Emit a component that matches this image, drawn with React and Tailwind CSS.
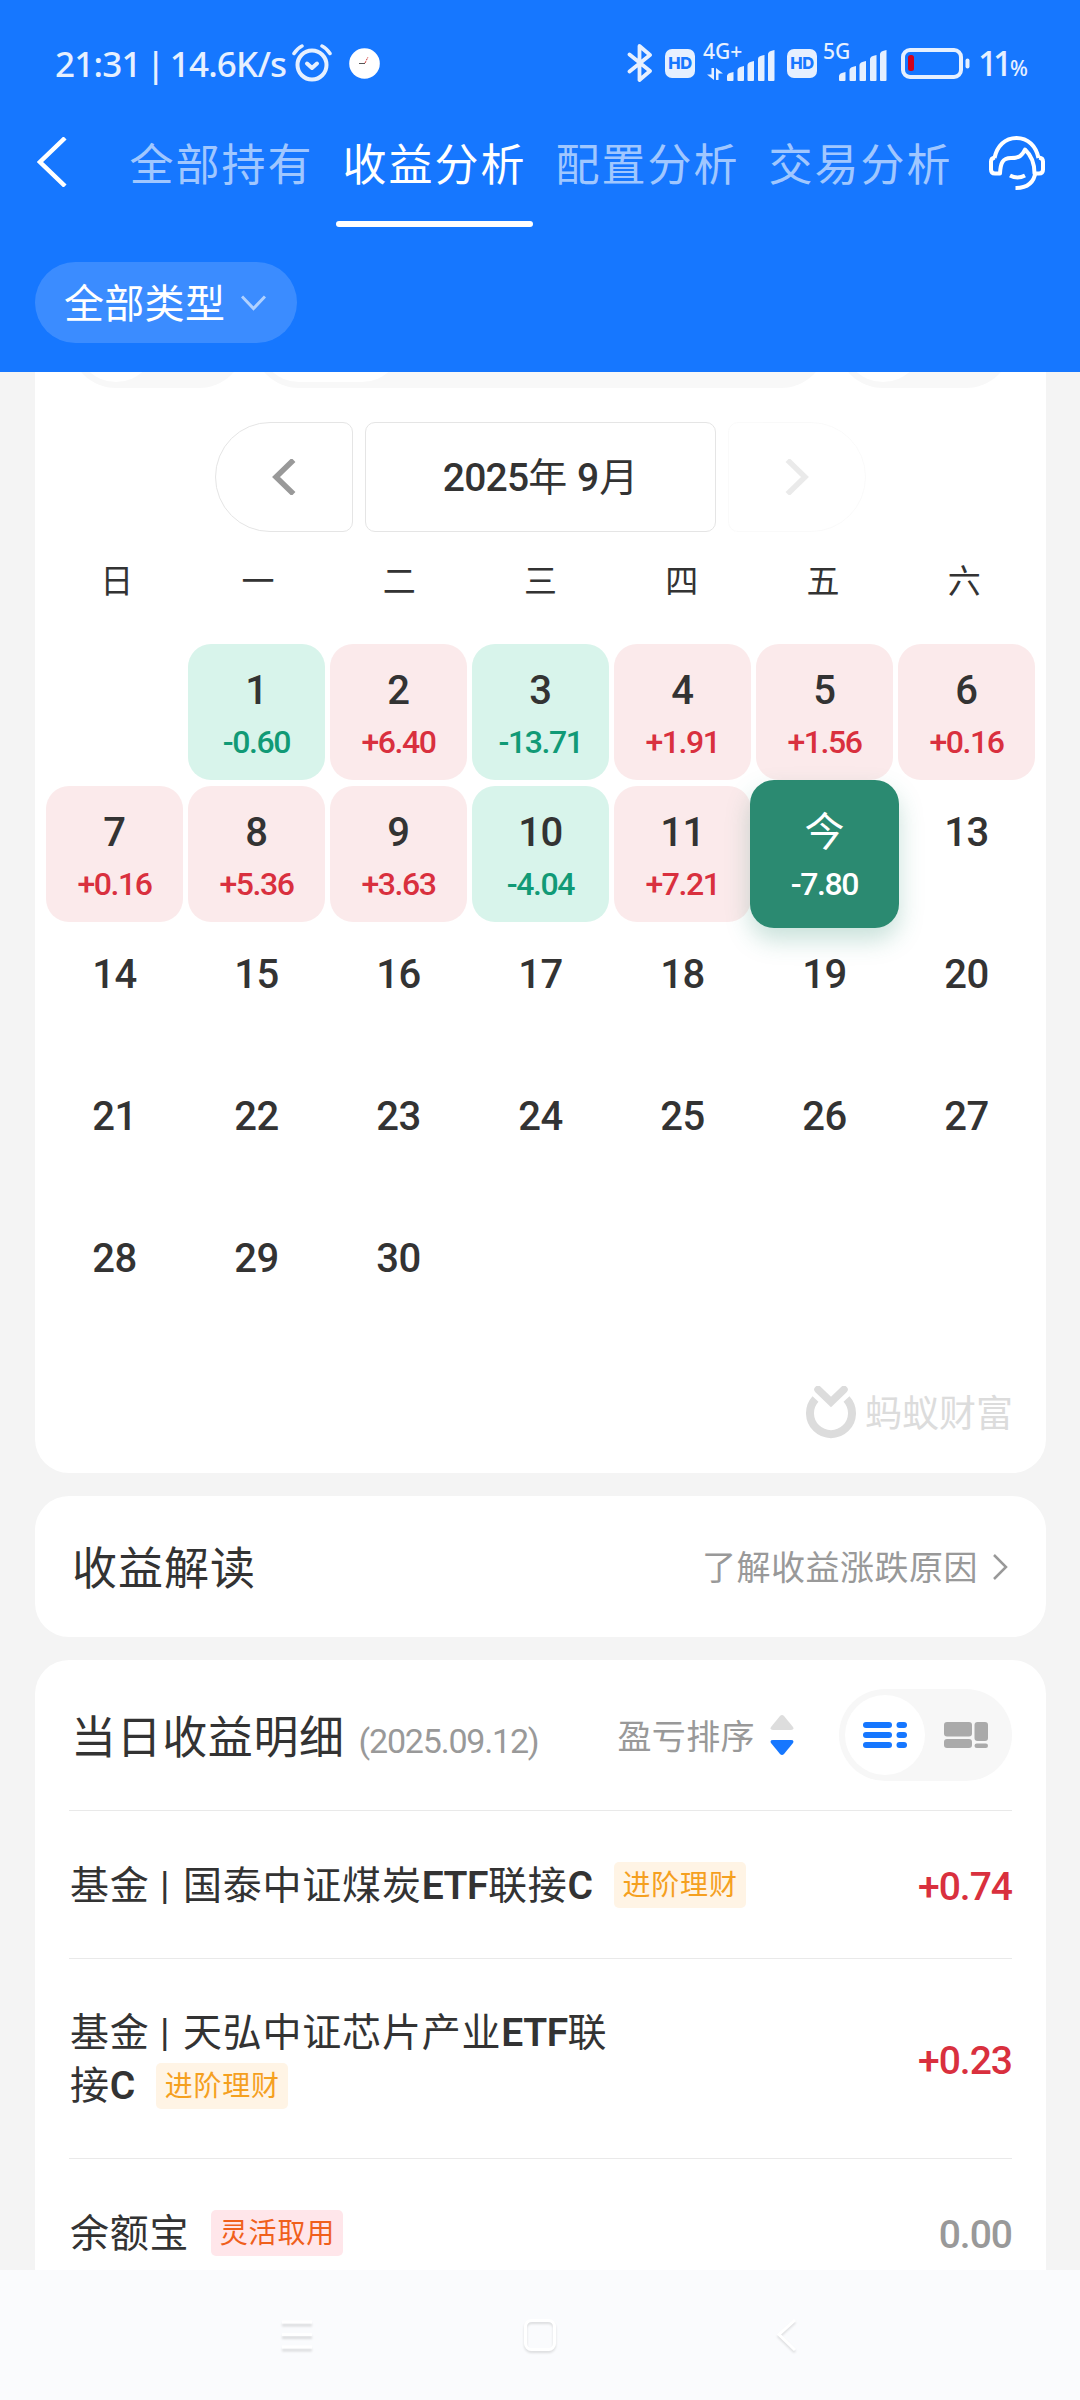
const weekdays = ['日', '一', '二', '三', '四', '五', '六'];

const profits = {
    1: '-0.60',
    2: '+6.40',
    3: '-13.71',
    4: '+1.91',
    5: '+1.56',
    6: '+0.16',
    7: '+0.16',
    8: '+5.36',
    9: '+3.63',
    10: '-4.04',
    11: '+7.21',
    12: '-7.80',
};

const today = 12;

// September 2025 starts on a Monday, so one empty cell comes first
const cells = [null, ...Array.from({ length: 30 }, (_, i) => i + 1)];

const tabs = ['全部持有', '收益分析', '配置分析', '交易分析'];

const details = [
    {
        name: (
            <>
                基金 <span className="mr-[2px]">|</span> 国泰中证煤炭
                <b className="font-semibold tracking-[-0.5px]">ETF</b>联接<b className="font-semibold tracking-[-1px]">C</b>
            </>
        ),
        tag: '进阶理财',
        tagClass: 'bg-[#fff4e5] text-[#f5a01f]',
        value: '+0.74',
        valueClass: 'text-[#d9303e]',
        height: 'h-[148px]',
    },
    {
        name: (
            <>
                基金 <span className="mr-[2px]">|</span> 天弘中证芯片产业
                <b className="font-semibold tracking-[-0.5px]">ETF</b>联<br />接<b className="font-semibold tracking-[-1px]">C</b>
            </>
        ),
        tag: '进阶理财',
        tagClass: 'bg-[#fff4e5] text-[#f5a01f]',
        value: '+0.23',
        valueClass: 'text-[#d9303e]',
        height: 'h-[200px]',
    },
    {
        name: '余额宝',
        tag: '灵活取用',
        tagClass: 'bg-[#ffe6ea] text-[#f0601c]',
        value: '0.00',
        valueClass: 'text-[#999999]',
        height: 'h-[148px]',
    },
];

function Chevron({ className, d, box, stroke }) {
    return (
        <svg className={className} viewBox={box} fill="none" stroke="currentColor" strokeWidth={stroke}>
            <path d={d} />
        </svg>
    );
}

function HdBadge() {
    return (
        <div className="flex h-[29px] w-[30px] items-center justify-center rounded-[7px] bg-[#e6f0ff] font-['Inter'] text-[16.5px] leading-none font-extrabold tracking-[-0.5px] text-[#1677ff]">
            HD
        </div>
    );
}

function SignalBars() {
    return (
        <svg className="h-[31px] w-[48px]" viewBox="0 0 48 31" fill="#e6f0ff">
            <path d="M0 26q0-3 6.500-4v8q0 1-1 1H1q-1 0-1-1z" />
            <path d="M10.500 20q0-3 6.500-4v14q0 1-1 1h-4.500q-1 0-1-1z" />
            <path d="M20.500 15q0-3 6.500-4v19q0 1-1 1h-4.500q-1 0-1-1z" />
            <path d="M31 9q0-3 6.500-4v25q0 1-1 1h-4.500q-1 0-1-1z" />
            <path d="M41 4q0-3 6.500-4v30q0 1-1 1h-4.500q-1 0-1-1z" />
        </svg>
    );
}

function StatusBar() {
    return (
        <div className="flex h-[126px] items-center pl-[55px] text-[#e6f0ff]">
            <span className="w-[237px] font-['Noto_Sans'] text-[35px] leading-none font-medium tracking-[-0.8px] whitespace-nowrap [word-spacing:-3px]">
                21:31 | 14.6K/s
            </span>
            <svg className="h-[38px] w-[40px]" viewBox="0 0 40 38" fill="none" stroke="currentColor" strokeLinecap="round" strokeLinejoin="round">
                <circle cx="20" cy="21" r="14.500" strokeWidth="4" />
                <path d="M15 19.500l5 4.500 5-4.500" strokeWidth="4" />
                <path d="M2 9.500Q5 4.500 10 2M38 9.500Q35 4.500 30 2" strokeWidth="3.500" />
            </svg>
            <svg className="ml-[17px] h-[31px] w-[31px]" viewBox="0 0 31 31" fill="none">
                <circle cx="15.500" cy="15.500" r="15.300" fill="#fff" />
                <path d="M10 15.500h6" stroke="#555" strokeWidth="1" />
                <path d="M16 15l3-6" stroke="#c33" strokeWidth="1" strokeDasharray="2 1" />
            </svg>

            <svg className="ml-[247px] h-[40px] w-[26px]" viewBox="0 0 26 40" fill="none" stroke="currentColor" strokeWidth="3.800" strokeLinejoin="round" strokeLinecap="round">
                <path d="M2.500 11.500L23 28 12.500 37V3L23 12 2.500 28.500" />
            </svg>
            <div className="ml-[12px]">
                <HdBadge />
            </div>
            <div className="relative ml-[32px] flex h-[36px] items-end">
                <span className="absolute -top-[4px] -left-[24px] font-['Noto_Sans'] text-[21px] leading-none font-medium">4G+</span>
                <svg className="absolute bottom-[1px] -left-[20px] h-[12px] w-[16px]" viewBox="0 0 16 12" fill="currentColor">
                    <path d="M4.500 0h2.500v12L0 6.500h4.500zM9 0l7 5.500h-4.500V12H9z" />
                </svg>
                <SignalBars />
            </div>
            <div className="ml-[12px]">
                <HdBadge />
            </div>
            <div className="relative ml-[22px] flex h-[36px] items-end">
                <span className="absolute -top-[4px] -left-[16px] font-['Noto_Sans'] text-[21px] leading-none font-medium">5G</span>
                <SignalBars />
            </div>
            <svg className="ml-[14px] h-[31px] w-[69px]" viewBox="0 0 69 31" fill="none">
                <rect x="2" y="2" width="58" height="27" rx="7" stroke="#e6f0ff" strokeWidth="4" />
                <rect x="64.500" y="10.500" width="4" height="10" rx="2" fill="#e6f0ff" />
                <rect x="7" y="7" width="6" height="16" rx="2.500" fill="#d0021b" />
            </svg>
            <div className="ml-[8px] flex items-baseline font-['Noto_Sans'] leading-none font-medium">
                <span className="text-[34px] tracking-[-4.5px]">11</span>
                <span className="ml-[2px] text-[21px]">%</span>
            </div>
        </div>
    );
}

function Header() {
    return (
        <header className="flex h-[372px] shrink-0 flex-col bg-[#1677ff] text-white">
            <StatusBar />
            <nav className="flex h-[102px] items-start pl-[37px]">
                <Chevron className="mt-[11px] h-[50px] w-[31px]" box="0 0 31 50" d="M28 1L3 25l25 24" stroke="4.500" />
                <div className="ml-[55px] flex gap-[16px]">
                    {tabs.map((tab, i) => (
                        <div key={tab} className="flex w-[197px] flex-col items-center">
                            <span
                                className={`h-[95px] text-[44px] leading-[80px] tracking-[2px] whitespace-nowrap ${
                                    i === 1 ? 'text-white' : 'text-white/60'
                                }`}
                            >
                                {tab}
                            </span>
                            {i === 1 && <div className="h-[6px] w-[197px] rounded-full bg-white" />}
                        </div>
                    ))}
                </div>
                <svg className="mt-[9px] ml-[29px] h-[56px] w-[58px]" viewBox="0 0 58 56" fill="none" stroke="currentColor" strokeWidth="4" strokeLinejoin="round">
                    <path d="M6.500 23C9 11 17 3 28.500 3S48 11 50.500 23" />
                    <path d="M7 22.500q-4 .5-4 4v8q0 4 4 4h5C12.500 28 14.500 23 23 23c8 0 11-2 14-8.500C43 20 46.500 27 46.500 38.500H51q4 0 4-4v-8q0-3.500-4-4" />
                    <path d="M22 40.500q7.500 4 15 0" />
                    <path d="M47.500 37C46 48 39 53 27.500 53" />
                </svg>
            </nav>
            <button className="mt-[34px] ml-[35px] flex h-[81px] w-[262px] items-center rounded-full bg-white/16 pl-[29px]">
                <span className="pt-[4px] text-[40px] leading-none tracking-[0.3px]">全部类型</span>
                <Chevron className="mt-[1px] ml-[16px] h-[17px] w-[25px] text-white/60" box="0 0 25 17" d="M1 1.500l11.500 12 11.500-12" stroke="3" />
            </button>
        </header>
    );
}

function Day({ day }) {
    if (!day) return <div />;
    const profit = profits[day];
    const isToday = day === today;
    const loss = profit?.startsWith('-');

    let style = 'rounded-[23px]';
    if (isToday) style = 'z-10 -m-[6px] rounded-[24px] bg-[#2b8a71] pt-[6px] text-white shadow-[0_12px_24px_rgba(43,138,113,0.26)]';
    else if (loss) style = 'rounded-[23px] bg-[#d8f4eb]';
    else if (profit) style = 'rounded-[23px] bg-[#fbeaeb]';

    let color = 'text-[#d9303e]';
    if (isToday) color = 'text-white';
    else if (loss) color = 'text-[#119a76]';

    return (
        <div className={`flex flex-col items-center ${style}`}>
            <span className={`mt-[23px] text-[40px] leading-[48px] ${isToday ? 'font-normal' : 'font-medium tracking-[-0.4px]'}`}>
                {isToday ? '今' : day}
            </span>
            {profit && <span className={`mt-[7px] text-[32px] leading-[40px] font-medium tracking-[-1.4px] ${color}`}>{profit}</span>}
        </div>
    );
}

// Bottom edge of the filter pills that scroll away under the header
function FilterPills() {
    return (
        <div className="flex h-[16px] items-end overflow-hidden pl-[35px]">
            <div className="flex h-[92px] w-[175px] shrink-0 rounded-full bg-[#f8f8f8] p-[6px]">
                <div className="w-[80px] rounded-full bg-white" />
            </div>
            <div className="ml-[8px] flex h-[92px] w-[574px] shrink-0 rounded-full bg-[#f8f8f8] p-[6px]">
                <div className="w-[143px] rounded-full bg-white" />
            </div>
            <div className="ml-[10px] flex h-[92px] w-[175px] shrink-0 rounded-full bg-[#f8f8f8] p-[6px]">
                <div className="w-[80px] rounded-full bg-white" />
            </div>
        </div>
    );
}

function CalendarCard() {
    return (
        <section className="flex h-[1101px] shrink-0 flex-col rounded-b-[34px] bg-white">
            <FilterPills />
            <div className="mt-[34px] flex justify-center gap-[12px]">
                <button className="flex h-[110px] w-[138px] items-center justify-center rounded-l-[55px] rounded-r-[10px] border border-[#e5e5e5] text-[#999999]">
                    <Chevron className="h-[36px] w-[24px]" box="0 0 24 36" d="M21.500 1L4 18l17.500 17" stroke="5.500" />
                </button>
                <div className="flex h-[110px] w-[351px] items-center justify-center rounded-[10px] border border-[#e5e5e5] pt-[3px] text-[39px] leading-none whitespace-pre">
                    <span className="font-medium tracking-[-0.8px]">2025</span>年<span className="font-medium"> 9</span>月
                </div>
                <button className="flex h-[110px] w-[138px] items-center justify-center rounded-l-[10px] rounded-r-[55px] border border-[#e5e5e5] text-[#999999] opacity-20">
                    <Chevron className="h-[36px] w-[24px]" box="0 0 24 36" d="M2.500 1L20 18 2.500 35" stroke="5.500" />
                </button>
            </div>
            <div className="mt-[28px] grid grid-cols-7 px-[11px] text-center text-[33px] leading-[44px]">
                {weekdays.map((w) => (
                    <span key={w}>{w}</span>
                ))}
            </div>
            <div className="mt-[40px] grid auto-rows-[136px] grid-cols-[repeat(7,137px)] gap-x-[5px] gap-y-[6px] pl-[11px]">
                {cells.map((day, i) => (
                    <Day key={i} day={day} />
                ))}
            </div>
            <div className="mt-[38px] flex items-center justify-end pr-[33px] text-[#dcdcdc]">
                <svg className="h-[54px] w-[52px]" viewBox="0 0 52 54" fill="none" stroke="currentColor">
                    <path d="M9.500 13A21 21 0 1 0 40.500 13" strokeWidth="8" />
                    <path d="M12 3.500L25 16 38 3.500" strokeWidth="7.500" strokeLinecap="round" />
                </svg>
                <span className="ml-[7px] pt-[2px] text-[37px] leading-none">蚂蚁财富</span>
            </div>
        </section>
    );
}

function InsightCard() {
    return (
        <section className="flex h-[141px] shrink-0 items-center justify-between rounded-[34px] bg-white pr-[37px] pl-[37px]">
            <h2 className="pt-[6px] text-[45px] leading-none tracking-[1px]">收益解读</h2>
            <div className="flex items-center text-[#999999]">
                <span className="pt-[2px] text-[34px] leading-none tracking-[0.5px]">了解收益涨跌原因</span>
                <Chevron className="ml-[13px] h-[26px] w-[18px]" box="0 0 18 26" d="M3 1l12 12L3 25" stroke="2.500" />
            </div>
        </section>
    );
}

function DetailCard() {
    return (
        <section className="shrink-0 rounded-t-[34px] bg-white px-[34px]">
            <div className="flex h-[151px] items-center border-b border-[#e9e9e9] pl-[2px]">
                <h2 className="pt-[6px] text-[45px] leading-none tracking-[0.6px]">当日收益明细</h2>
                <span className="mt-[12px] ml-[14px] w-[180px] text-[34px] leading-none tracking-[-1.2px] whitespace-nowrap text-[#999999]">
                    (2025.09.12)
                </span>
                <div className="ml-auto flex items-center text-[#999999]">
                    <span className="pt-[3px] text-[34px] leading-none tracking-[0.4px]">盈亏排序</span>
                    <svg className="ml-[15px] h-[42px] w-[24px]" viewBox="0 0 24 42">
                        <path d="M10 2q2-2 4 0l9 11q1.500 3-2 3H3q-3.500 0-2-3z" fill="#dddddd" />
                        <path d="M10 40q2 2 4 0l9-11q1.500-3-2-3H3q-3.500 0-2 3z" fill="#1677ff" />
                    </svg>
                </div>
                <div className="ml-[45px] flex h-[92px] w-[173px] rounded-full bg-[#f7f7f7] p-[6px]">
                    <div className="flex w-[80px] items-center justify-center rounded-full bg-white">
                        <svg className="h-[26px] w-[44px]" viewBox="0 0 44 26" fill="#1677ff">
                            <rect width="29" height="6" rx="3" />
                            <rect y="10" width="29" height="6" rx="3" />
                            <rect y="20" width="29" height="6" rx="3" />
                            <rect x="33.500" width="10.500" height="6" rx="3" />
                            <rect x="33.500" y="10" width="10.500" height="6" rx="3" />
                            <rect x="33.500" y="20" width="10.500" height="6" rx="3" />
                        </svg>
                    </div>
                    <div className="flex flex-1 items-center justify-center">
                        <svg className="h-[26px] w-[44px]" viewBox="0 0 44 26" fill="#aaaaaa">
                            <rect width="28" height="14.500" rx="3" />
                            <rect y="17" width="28" height="9" rx="3" />
                            <rect x="30.500" width="13.500" height="19" rx="3" />
                            <rect x="30.500" y="21.500" width="13.500" height="4.500" rx="2.200" />
                        </svg>
                    </div>
                </div>
            </div>
            {details.map((item) => (
                <div key={item.value} className={`flex items-center justify-between border-b border-[#e9e9e9] ${item.height}`}>
                    <div className="pt-[3px] pl-px text-[39px] leading-[53px] tracking-[0.8px]">
                        {item.name}
                        <span
                            className={`relative -top-[3px] ml-[22px] inline-flex h-[46px] w-[132px] items-center justify-center rounded-[5px] pt-[2px] align-middle text-[28px] leading-none tracking-[0.8px] ${item.tagClass}`}
                        >
                            {item.tag}
                        </span>
                    </div>
                    <span className={`pt-[5px] text-[39px] leading-none font-medium tracking-[-1px] ${item.valueClass}`}>{item.value}</span>
                </div>
            ))}
        </section>
    );
}

function SystemNav() {
    return (
        <footer className="flex h-[130px] shrink-0 items-center bg-[#fafbfd] pl-[280px]">
            <svg className="h-[40px] w-[34px] drop-shadow-[0_3px_1px_rgba(0,0,0,0.12)]" viewBox="0 0 34 40" stroke="#fff" strokeWidth="3">
                <path d="M2 7h30M2 19.500h30M2 32h30" />
            </svg>
            <svg className="ml-[207px] h-[40px] w-[38px] drop-shadow-[0_2px_1px_rgba(0,0,0,0.12)]" viewBox="0 0 38 40" fill="none" stroke="#fff" strokeWidth="3">
                <rect x="4.500" y="5.500" width="29" height="29" rx="6" />
            </svg>
            <svg className="ml-[216px] h-[40px] w-[24px] drop-shadow-[0_2px_1px_rgba(0,0,0,0.12)]" viewBox="0 0 24 40" fill="none" stroke="#fff" strokeWidth="3">
                <path d="M20 5L4 19.500 20 35" />
            </svg>
        </footer>
    );
}

export default function App() {
    return (
        <div className="flex h-[2400px] w-[1080px] flex-col overflow-hidden bg-[#f4f4f4] font-['Roboto','Noto_Sans_CJK_SC',sans-serif] text-[#333333]">
            <Header />
            <main className="flex min-h-0 flex-1 flex-col gap-[23px] overflow-hidden pr-[34px] pl-[35px]">
                <CalendarCard />
                <InsightCard />
                <DetailCard />
            </main>
            <SystemNav />
        </div>
    );
}
